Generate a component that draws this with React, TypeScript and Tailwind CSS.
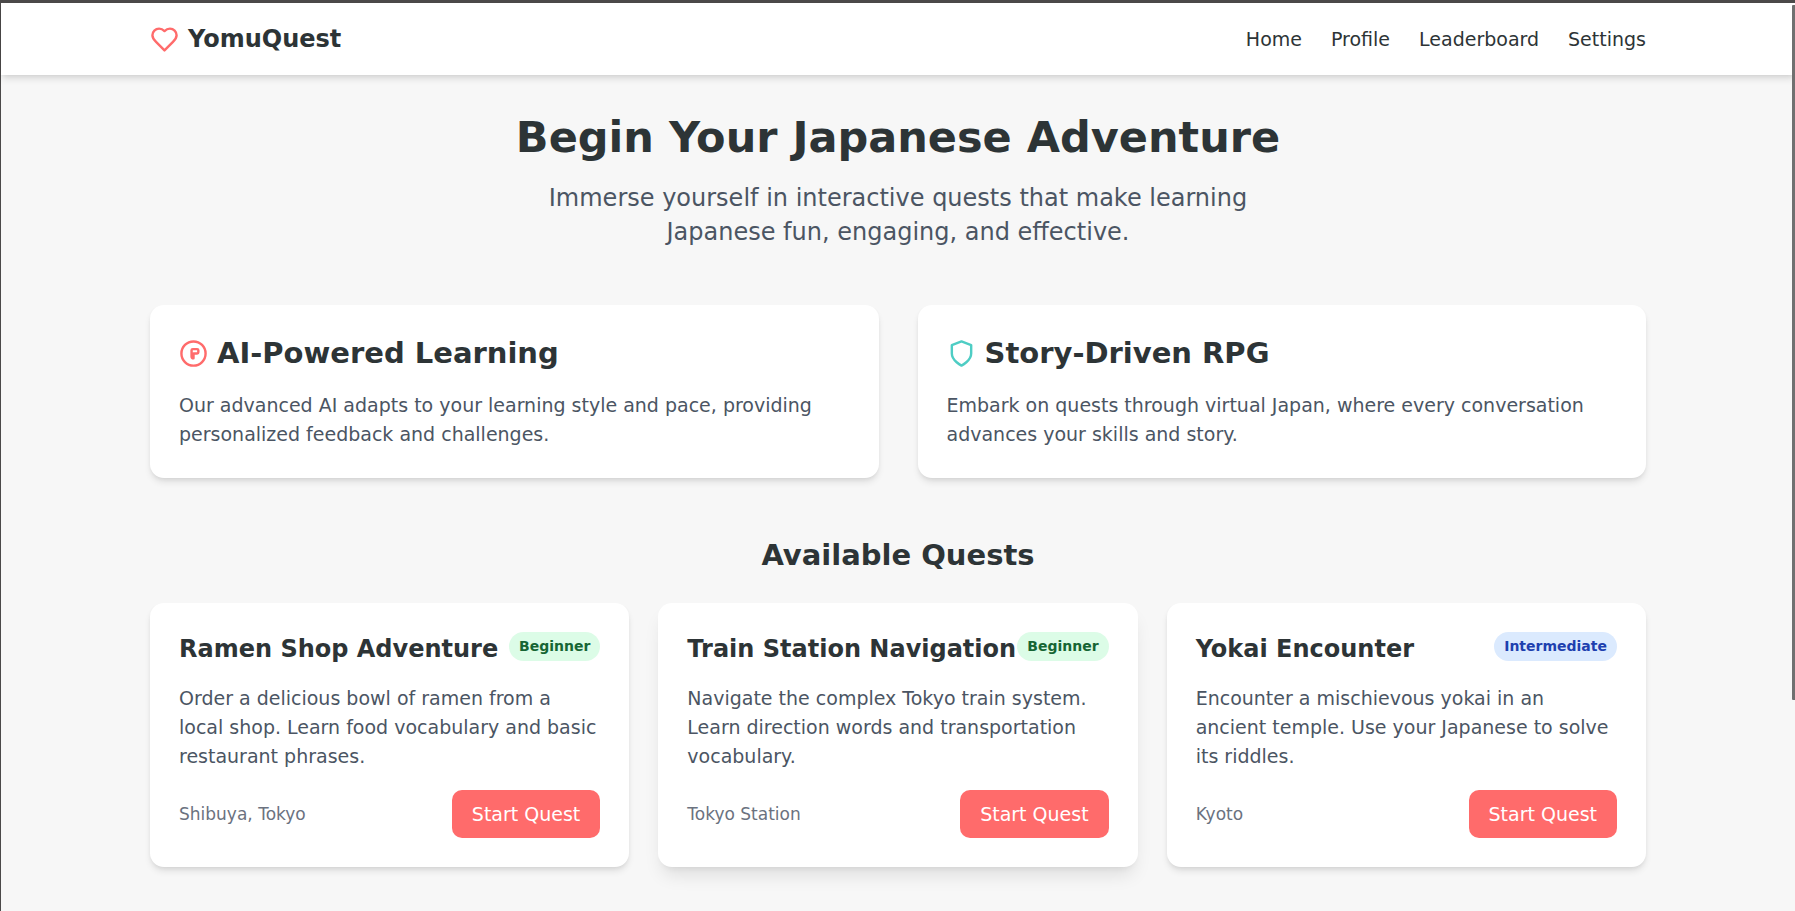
import { useState } from "react";

interface Feature {
  title: string;
  description: string;
  icon: React.ReactNode;
}

interface Quest {
  id: number;
  title: string;
  level: "Beginner" | "Intermediate";
  description: string;
  location: string;
}

const NAV_LINKS = ["Home", "Profile", "Leaderboard", "Settings"];

const levelStyles = {
  Beginner: "bg-[#dcfce7] text-[#166534]",
  Intermediate: "bg-[#dbeafe] text-[#1e40af]",
};

const features: Feature[] = [
  {
    title: "AI-Powered Learning",
    description:
      "Our advanced AI adapts to your learning style and pace, providing personalized feedback and challenges.",
    icon: (
      <svg viewBox="0 0 24 24" className="size-[29px] shrink-0 text-[#ff6b6b]" {...strokeProps()}>
        <circle cx="12" cy="12" r="10" />
        <path d="M10.4 9.4a1 1 0 0 1 1-1H15a1 1 0 0 1 1 1V11a1 1 0 0 1-1 1h-3v4a1.6 1.6 0 0 1-1.6-1.6z" />
      </svg>
    ),
  },
  {
    title: "Story-Driven RPG",
    description:
      "Embark on quests through virtual Japan, where every conversation advances your skills and story.",
    icon: (
      <svg viewBox="0 0 24 24" className="size-[29px] shrink-0 text-[#4ecdc4]" {...strokeProps()}>
        <path d="M12 22s8-4 8-10V5l-8-3-8 3v7c0 6 8 10 8 10z" />
      </svg>
    ),
  },
];

const quests: Quest[] = [
  {
    id: 1,
    title: "Ramen Shop Adventure",
    level: "Beginner",
    description:
      "Order a delicious bowl of ramen from a local shop. Learn food vocabulary and basic restaurant phrases.",
    location: "Shibuya, Tokyo",
  },
  {
    id: 2,
    title: "Train Station Navigation",
    level: "Beginner",
    description:
      "Navigate the complex Tokyo train system. Learn direction words and transportation vocabulary.",
    location: "Tokyo Station",
  },
  {
    id: 3,
    title: "Yokai Encounter",
    level: "Intermediate",
    description:
      "Encounter a mischievous yokai in an ancient temple. Use your Japanese to solve its riddles.",
    location: "Kyoto",
  },
];

function strokeProps() {
  return {
    fill: "none",
    stroke: "currentColor",
    strokeWidth: 2,
    strokeLinecap: "round" as const,
    strokeLinejoin: "round" as const,
    "aria-hidden": true,
  };
}

function Header() {
  return (
    <header className="bg-white shadow-[0_5px_7px_-1px_rgba(0,0,0,0.1),0_2px_5px_-2px_rgba(0,0,0,0.1)]">
      <div className="mx-auto flex max-w-[1536px] items-center justify-between px-5 py-[19px]">
        <div className="flex items-center gap-[9px]">
          <svg viewBox="0 0 24 24" className="size-[29px] text-[#ff6b6b]" {...strokeProps()}>
            <path d="M19 14c1.49-1.46 3-3.21 3-5.5A5.5 5.5 0 0 0 16.5 3c-1.76 0-3 .5-4.5 2-1.5-1.5-2.74-2-4.5-2A5.5 5.5 0 0 0 2 8.5c0 2.3 1.5 4.05 3 5.5l7 7Z" />
          </svg>
          <span className="text-[24px] leading-[34px] font-bold">YomuQuest</span>
        </div>
        <nav className="flex gap-[29px]">
          {NAV_LINKS.map((link) => (
            <a key={link} href="#" className="transition-colors hover:text-[#ff6b6b]">
              {link}
            </a>
          ))}
        </nav>
      </div>
    </header>
  );
}

function QuestCard({ quest, active, onHover }: { quest: Quest; active: boolean; onHover: () => void }) {
  return (
    <article
      onMouseEnter={onHover}
      className={`rounded-[14px] bg-white p-[29px] transition-shadow ${
        active
          ? "shadow-[0_12px_18px_-4px_rgba(0,0,0,0.1),0_5px_7px_-5px_rgba(0,0,0,0.1)]"
          : "shadow-[0_5px_7px_-1px_rgba(0,0,0,0.1),0_2px_5px_-2px_rgba(0,0,0,0.1)]"
      }`}
    >
      <div className="mb-[18px] flex items-start justify-between">
        <h3 className="text-[24px] leading-[34px] font-bold whitespace-nowrap">{quest.title}</h3>
        <span className={`rounded-full px-[10px] py-[5px] text-[14px] leading-[19px] font-semibold ${levelStyles[quest.level]}`}>
          {quest.level}
        </span>
      </div>
      <p className="mb-[19px] text-[#4b5563]">{quest.description}</p>
      <div className="flex items-center justify-between">
        <span className="text-[17px] leading-[24px] text-[#6b7280]">{quest.location}</span>
        <button
          type="button"
          className="rounded-[10px] bg-[#ff6b6b] px-5 py-[10px] leading-[28px] text-white transition-colors hover:bg-[#ff5252]"
        >
          Start Quest
        </button>
      </div>
    </article>
  );
}

export default function App() {
  const [activeQuest, setActiveQuest] = useState(2);

  return (
    <div className="relative min-h-screen border-t-3 border-l border-[#4b4949] bg-[#f7f7f7] font-['DejaVu_Sans',sans-serif] text-[19px] leading-[29px] text-[#2d3436]">
      <Header />

      <main className="mx-auto max-w-[1536px] px-5 py-[38px]">
        <section className="mb-14 text-center">
          <h1 className="mb-5 text-[43px] leading-[48px] font-bold">Begin Your Japanese Adventure</h1>
          <p className="mx-auto max-w-[806px] text-[24px] leading-[34px] text-[#4b5563]">
            Immerse yourself in interactive quests that make learning Japanese fun, engaging, and effective.
          </p>
        </section>

        <section className="mb-[58px] grid gap-[39px] md:grid-cols-2">
          {features.map((feature) => (
            <div
              key={feature.title}
              className="rounded-[14px] bg-white p-[29px] shadow-[0_5px_7px_-1px_rgba(0,0,0,0.1),0_2px_5px_-2px_rgba(0,0,0,0.1)]"
            >
              <div className="mb-[19px] flex items-center gap-[9px]">
                {feature.icon}
                <h2 className="text-[29px] leading-[38px] font-bold">{feature.title}</h2>
              </div>
              <p className="text-[#4b5563]">{feature.description}</p>
            </div>
          ))}
        </section>

        <section>
          <h2 className="mb-[29px] text-center text-[29px] leading-[38px] font-bold">Available Quests</h2>
          <div className="grid gap-[29px] md:grid-cols-2 lg:grid-cols-3">
            {quests.map((quest) => (
              <QuestCard
                key={quest.id}
                quest={quest}
                active={activeQuest === quest.id}
                onHover={() => setActiveQuest(quest.id)}
              />
            ))}
          </div>
        </section>
      </main>

      {/* Scroll thumb */}
      <div className="absolute top-[2px] right-0 h-[695px] w-[3px] rounded-l-[1px] bg-[#707070]" />
    </div>
  );
}
